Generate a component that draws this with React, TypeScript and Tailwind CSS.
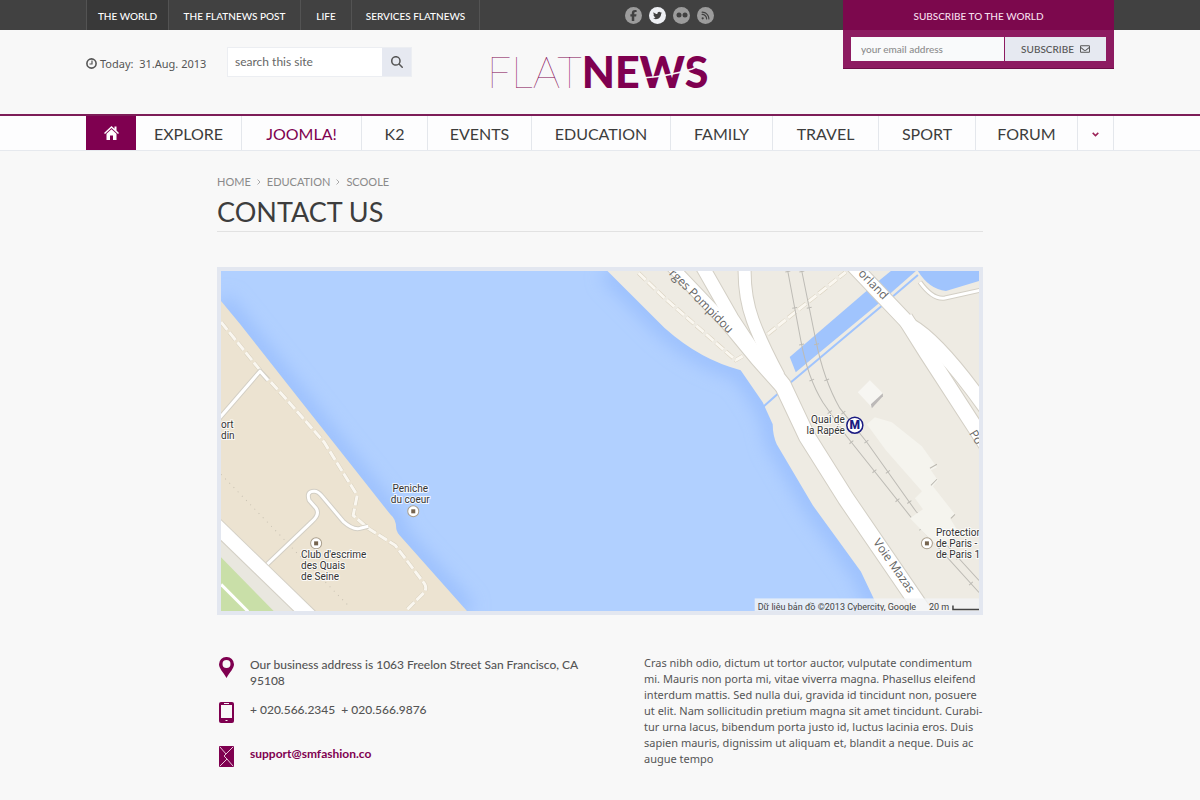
import React from "react";
import {
  FaFacebookF,
  FaMagnifyingGlass,
  FaRegEnvelope,
  FaRss,
  FaTwitter,
} from "react-icons/fa6";

type ContainerProps = { children: React.ReactNode; className?: string };

const Container = ({ children, className = "" }: ContainerProps) => (
  <div className={`mx-auto w-full max-w-[1028px] ${className}`}>{children}</div>
);

const DotsIcon = ({ className }: { className?: string }) => (
  <svg className={className} viewBox="0 0 12 12" fill="currentColor">
    <circle cx="3" cy="6" r="2.500" />
    <circle cx="9" cy="6" r="2.500" />
  </svg>
);

const topLinks = [
  { name: "THE WORLD", width: "w-[83px]", active: true },
  { name: "THE FLATNEWS POST", width: "w-[132px]" },
  { name: "LIFE", width: "w-[51px]" },
  { name: "SERVICES FLATNEWS", width: "w-[128px]" },
];

const socialLinks = [
  { name: "Facebook", Icon: FaFacebookF, color: "bg-[#9c9c9c]", size: "size-[11px]" },
  { name: "Twitter", Icon: FaTwitter, color: "bg-[#eef0f4]", size: "size-[9px]" },
  { name: "Flickr", Icon: DotsIcon, color: "bg-[#9c9c9c]", size: "size-[12px]" },
  { name: "RSS", Icon: FaRss, color: "bg-[#9c9c9c]", size: "size-[9px]" },
];

const TopBar = () => (
  <div className="bg-[#414141] text-[10px] font-medium text-white">
    <Container className="grid h-[30px] grid-cols-[394px_1fr_271px]">
      <ul className="flex">
        {topLinks.map((item) => (
          <li
            key={item.name}
            className={`border-r border-[#535353] ${item.width} ${item.active ? "border-l bg-[#393939]" : ""}`}
          >
            <a href="#" className="flex h-full items-center justify-center whitespace-nowrap pt-0.5">
              {item.name}
            </a>
          </li>
        ))}
      </ul>
      <div className="flex items-center justify-center gap-[7px] pl-4">
        {socialLinks.map(({ name, Icon, color, size }) => (
          <a
            key={name}
            href="#"
            aria-label={name}
            className={`flex size-[17px] items-center justify-center rounded-full text-[#414141] ${color}`}
          >
            <Icon className={size} />
          </a>
        ))}
      </div>
    </Container>
  </div>
);

const Subscribe = () => (
  <form className="absolute top-0 right-0 w-[271px] border-b border-[#6d0d47] bg-[#8d1b61] text-[10px] font-medium">
    <label htmlFor="email" className="flex h-[30px] items-center justify-center bg-[#7c084d] pt-0.5 text-[#f6dfec]">
      SUBSCRIBE TO THE WORLD
    </label>
    <div className="flex gap-px px-2 py-[7px]">
      <input
        id="email"
        type="email"
        placeholder="your email address"
        className="h-6 w-[153px] bg-[#f9fafb] px-[10px] placeholder:text-[#8c8c8c]"
      />
      <button type="button" className="flex h-6 flex-1 items-center justify-center gap-[6px] bg-[#e6e9f1] text-[#555]">
        SUBSCRIBE
        <FaRegEnvelope className="size-[10px]" />
      </button>
    </div>
  </form>
);

const Logo = () => (
  <a href="#" className="relative flex text-[43px] leading-none text-[#7f0050]">
    <span className="font-thin">FLAT</span>
    <span className="font-black">NEWS</span>
    <svg className="absolute right-0 bottom-0 h-full w-[66px]" viewBox="0 0 66 43" fill="none">
      <path d="M0 28Q28 26 50 19L66 12" stroke="#f8f8f8" strokeWidth="1.500" />
    </svg>
  </a>
);

const Header = () => (
  <Container className="grid h-[84px] grid-cols-[141px_260px_1fr]">
    <div className="flex items-start gap-[3px] pt-[26px] font-['Noto_Sans'] text-[11px] leading-4 text-[#555]">
      <svg className="mt-[2px] size-[11px]" viewBox="0 0 11 11" fill="none" stroke="currentColor">
        <circle cx="5.500" cy="5.500" r="4.600" strokeWidth="1.600" />
        <path d="M6 2.500V6H3.500" strokeWidth="1.200" />
      </svg>
      <span className="whitespace-pre">Today:  31.Aug. 2013</span>
    </div>
    <form className="mt-[17px] flex h-[30px] w-[185px] border border-[#eceef2]">
      <input
        aria-label="Search"
        type="text"
        placeholder="search this site"
        className="w-[154px] bg-white px-[7px] text-[12px] placeholder:text-[#666]"
      />
      <button
        type="button"
        aria-label="Search"
        className="flex flex-1 items-center justify-center bg-[#e6e9f1] text-[#555]"
      >
        <FaMagnifyingGlass className="size-[12px]" />
      </button>
    </form>
    <div className="mt-[20px] flex items-start">
      <Logo />
    </div>
  </Container>
);

const menu = [
  { name: "EXPLORE", width: "w-[106px]" },
  { name: "JOOMLA!", width: "w-[120px]", active: true },
  { name: "K2", width: "w-[66px]" },
  { name: "EVENTS", width: "w-[104px]" },
  { name: "EDUCATION", width: "w-[139px]" },
  { name: "FAMILY", width: "w-[102px]" },
  { name: "TRAVEL", width: "w-[106px]" },
  { name: "SPORT", width: "w-[97px]" },
  { name: "FORUM", width: "w-[102px]" },
];

const Nav = () => (
  <nav className="border-t-2 border-b border-t-[#7d1d58] border-b-[#e6e9ee] bg-[#fdfdfe]">
    <Container>
      <ul className="flex h-[34px] text-[16px] text-[#3d3d3d]">
        <li className="w-[50px]">
          <a
            href="#"
            aria-label="Home"
            className="flex h-full items-center justify-center bg-[#7f0050] text-white"
          >
            <svg className="h-[14px] w-[15px]" viewBox="0 0 15 14" fill="currentColor">
              <path d="M7.500 0 0 7l1 1 6.500-6L14 8l1-1-2.500-2.400V.500h-2v2.300z" />
              <path d="M7.500 3.200 2.500 7.800V14H6V9.500h3V14h3.500V7.800z" />
            </svg>
          </a>
        </li>
        {menu.map((item) => (
          <li key={item.name} className={`border-r border-[#e4e7ec] ${item.width}`}>
            <a
              href="#"
              className={`flex h-full items-center justify-center pt-px ${item.active ? "text-[#7f0050]" : ""}`}
            >
              {item.name}
            </a>
          </li>
        ))}
        <li className="flex-1 border-r border-[#e4e7ec]">
          <button
            type="button"
            aria-label="More"
            className="flex size-full items-center justify-center pt-0.5 text-[#9b2257]"
          >
            <svg className="h-[5px] w-[7px]" viewBox="0 0 7 5" fill="none" stroke="currentColor" strokeWidth="1.500">
              <path d="m.7.900 2.800 2.700L6.300.900" />
            </svg>
          </button>
        </li>
      </ul>
    </Container>
  </nav>
);

const crumbs = ["HOME", "EDUCATION", "SCOOLE"];

const PageTitle = () => (
  <div className="border-b border-[#e2e2e2] pt-[23px]">
    <ol className="flex text-[11px] leading-4 text-[#8a8a8a]">
      {crumbs.map((name, i) => (
        <li key={name} className="flex items-center">
          {i > 0 && (
            <svg className="mx-[6px] h-[6px] w-1" viewBox="0 0 4 6" fill="none" stroke="#aaa">
              <path d="m.5.500 2.500 2.500-2.500 2.500" />
            </svg>
          )}
          <a href="#">{name}</a>
        </li>
      ))}
    </ol>
    <h1 className="pt-[6px] pb-[3px] text-[27px] leading-8 text-[#3d3d3d]">CONTACT US</h1>
  </div>
);

type Street = { d: string; width: number };

// All casings go under all fills, so that streets merge where they meet
const Roads = ({ streets }: { streets: Street[] }) => (
  <g fill="none" strokeLinejoin="round">
    {streets.map(({ d, width }) => (
      <path key={d} d={d} stroke="#d3cfc5" strokeWidth={width + 2} />
    ))}
    {streets.map(({ d, width }) => (
      <path key={d} d={d} stroke="#fff" strokeWidth={width} />
    ))}
  </g>
);

const Footpath = ({ d }: { d: string }) => (
  <g fill="none" strokeDasharray="10 3">
    <path d={d} stroke="#d9d1bf" strokeWidth="4" />
    <path d={d} stroke="#faf7f0" strokeWidth="3" />
  </g>
);

const Rail = ({ d }: { d: string }) => (
  <g fill="none" stroke="#bdbbb5">
    <path d={d} />
    <path d={d} strokeWidth="5" strokeDasharray="1 36" />
  </g>
);

const Place = ({ x, y }: { x: number; y: number }) => (
  <g>
    <circle cx={x} cy={y} r="5.500" fill="#fff" stroke="#a99e8c" />
    <rect x={x - 2} y={y - 2} width="4" height="4" fill="#75644f" />
  </g>
);

type MapLabelProps = {
  x: number;
  y: number;
  lines: string[];
  anchor?: "start" | "middle" | "end";
};

const MapLabel = ({ x, y, lines, anchor = "start" }: MapLabelProps) => (
  <text
    textAnchor={anchor}
    className="fill-[#333] stroke-white/80 font-[Roboto] text-[10px]"
    strokeWidth="2"
    paintOrder="stroke"
  >
    {lines.map((line, i) => (
      <tspan key={line} x={x} y={y + i * 11}>
        {line}
      </tspan>
    ))}
  </text>
);

const banks = {
  left: "M221 301L240 324L300 400L345 457L390 514Q396 519 396 528Q396 532 402 538L467 611",
  right: "M607 271L664 328Q700 360 740 370L762 402L772 424Q772 435 776 444L812 505L860 571L879 611",
};

const gardenPaths = [
  { d: "M216 422L260 371L268 380", width: 3 },
  {
    d: "M267 564L312 521Q320 514 316 508L309 500Q306 491 314 491Q318 491 322 496L343 521Q353 530 360 528L368 526",
    width: 3,
  },
];

const streets = [
  { d: "M668 263L727 325L755 359L780 387", width: 11 },
  { d: "M698 260L731 318L760 362", width: 13 },
  { d: "M744 265Q743 295 752 320Q760 342 778 376", width: 12 },
  { d: "M758 355L782 385L806 436L845 498L925 615", width: 16 },
  { d: "M850 263L910 326Q938 342 985 408", width: 14 },
  { d: "M904 318L926 353L985 444", width: 15 },
];

const Map = () => (
  <figure className="mt-[35px] border-4 border-[#e3e7f0]">
    <svg className="block w-full" viewBox="221 271 757 340" role="img" aria-label="Map of the Quai de la Rapée">
      <defs>
        <filter id="shade" x="-20%" y="-20%" width="140%" height="140%">
          <feGaussianBlur stdDeviation="9" />
        </filter>
      </defs>
      <rect x="221" y="271" width="757" height="340" fill="#b1d0ff" />
      <g fill="none" stroke="#93bafc" strokeWidth="18" strokeOpacity=".8" filter="url(#shade)">
        <path d={banks.left} />
        <path d={banks.right} />
      </g>

      {/* left bank */}
      <path d={`${banks.left}H221Z`} fill="#ece3d1" />
      <path d="M221 535L300 611H221Z" fill="#e9e7df" />
      <path d="M221 557L274 611H221Z" fill="#c9dfa8" />
      <path d="M221 584L248 611" stroke="#fff" strokeWidth="3" />
      <path d="M221 474L282 537L300 556L350 607" fill="none" stroke="#c8c1b2" strokeDasharray="1 5" />
      <Footpath d="M221 322L260 370L288 401L324 442L357 495L353 515L368 528L395 545L424 583Q428 589 421 595L405 611" />
      <Roads streets={gardenPaths} />
      <Roads streets={[{ d: "M214 523L312 618", width: 14 }]} />

      {/* right bank */}
      <path d={`${banks.right}H978V271Z`} fill="#eeebe3" />
      <path d="M789 357L868 289L890 271H915L882 300L795 372Z" fill="#a0c4fd" />
      <path d="M762 407L789 383L882 305L917 275" fill="none" stroke="#a0c4fd" strokeWidth="2" />
      <path d="M917 271Q928 289 945 291L978 281V271Z" fill="#a0c4fd" />
      <Roads streets={[{ d: "M919 282Q932 300 944 298L980 290", width: 3 }]} />
      <Footpath d="M638 273L664 298L735 360L742 356" />
      <Footpath d="M767 334L845 272" />
      <path d="M857 392L869 380L882 393L870 406Z" fill="#f7f6f2" />
      <path d="M870 404L882 393V396L871 408Z" fill="#bcb9b8" />
      <Rail d="M787 271L800 340Q807 378 822 402L845 435L911 518L978 592" />
      <Rail d="M801 271L815 340Q823 380 839 408L866 442L915 511L978 580" />
      <path
        d="M866 424L874 417L891 422L921 446L936 467L930 470L937 480L932 486L954 514L949 518L959 534L935 545L909 518L922 509L914 498L921 491L885 450Z"
        fill="#f5f4ee"
      />
      <path d="M929 468l7-4m-6 21 6-6m14 39 4-4" stroke="#bbb8b0" />
      <Roads streets={streets} />

      <g className="fill-[#666] font-['Open_Sans'] text-[12px]">
        <text transform="translate(668 274) rotate(45)">rges Pompidou</text>
        <text transform="translate(857 274) rotate(46)">orland</text>
        <text transform="translate(872 542) rotate(55)">Voie Mazas</text>
        <text transform="translate(968 433) rotate(58)">Po</text>
      </g>

      <Place x={413} y={511} />
      <Place x={316} y={543} />
      <Place x={926} y={543} />
      <MapLabel x={410} y={492} lines={["Peniche", "du coeur"]} anchor="middle" />
      <MapLabel x={301} y={558} lines={["Club d'escrime", "des Quais", "de Seine"]} />
      <MapLabel x={221} y={428} lines={["ort", "din"]} />
      <MapLabel x={844} y={423} lines={["Quai de", "la Rapée"]} anchor="end" />
      <MapLabel x={935} y={536} lines={["Protection", "de Paris -", "de Paris 1"]} />
      <circle cx="854" cy="425" r="8" fill="#fff" stroke="#1b1b82" strokeWidth="1.500" />
      <text x="854" y="429" textAnchor="middle" className="fill-[#1b1b82] font-[Roboto] text-[12px] font-black">
        M
      </text>

      <rect x="754" y="598" width="224" height="13" fill="#f3f4f5" fillOpacity=".8" />
      <g className="fill-[#444] font-[Roboto] text-[9px]">
        <text x="757" y="610">Dữ liệu bản đồ ©2013 Cybercity, Google</text>
        <text x="928" y="610">20 m</text>
      </g>
      <path d="M952 605V609H978" fill="none" stroke="#444" strokeWidth="1.500" />
    </svg>
  </figure>
);

const PinIcon = () => (
  <svg className="h-[21px] w-[15px]" viewBox="0 0 15 21">
    <path
      fillRule="evenodd"
      d="M7.500 0A7.300 7.300 0 0 0 0 7.300C0 11.500 4 15 7.500 21 11 15 15 11.500 15 7.300A7.300 7.300 0 0 0 7.500 0Zm0 3a4 4 0 1 1 0 8 4 4 0 0 1 0-8Z"
      fill="#7f0050"
    />
  </svg>
);

const PhoneIcon = () => (
  <svg className="h-[21px] w-[15px]" viewBox="0 0 15 21">
    <rect width="15" height="21" rx="2" fill="#7f0050" />
    <path d="M2 3h11v13H2z" fill="#f8f8f8" />
    <path d="M5 1.500h5M6.500 18.500h2" stroke="#f8f8f8" />
  </svg>
);

const MailIcon = () => (
  <svg className="h-[21px] w-[15px]" viewBox="0 0 15 21">
    <rect width="15" height="21" rx="1" fill="#7f0050" />
    <path d="M1 1l6 7-2 2 3 3-7 7M14 1 7 8M8 13l6 7" fill="none" stroke="#e9c6da" />
  </svg>
);

const Contact = () => (
  <section className="mt-[40px] grid grid-cols-[1fr_339px] gap-[59px] pl-0.5 text-[#555]">
    <ul className="pt-0.5 text-[12px] leading-4 font-medium">
      <li className="flex h-[45px] gap-4">
        <PinIcon />
        <span className="flex-1">
          Our business address is 1063 Freelon Street San Francisco, CA
          <br />
          95108
        </span>
      </li>
      <li className="flex h-[44px] gap-4">
        <PhoneIcon />
        <span className="whitespace-pre">+ 020.566.2345  + 020.566.9876</span>
      </li>
      <li className="flex gap-4">
        <MailIcon />
        <a href="mailto:support@smfashion.co" className="font-bold text-[#7f0050]">
          support@smfashion.co
        </a>
      </li>
    </ul>
    <p className="font-['Noto_Sans'] text-[11px] leading-4">
      Cras nibh odio, dictum ut tortor auctor, vulputate condimentum
      <br />
      mi. Mauris non porta mi, vitae viverra magna. Phasellus eleifend
      <br />
      interdum mattis. Sed nulla dui, gravida id tincidunt non, posuere
      <br />
      ut elit. Nam sollicitudin pretium magna sit amet tincidunt. Curabi-
      <br />
      tur urna lacus, bibendum porta justo id, luctus lacinia eros. Duis
      <br />
      sapien mauris, dignissim ut aliquam et, blandit a neque. Duis ac
      <br />
      augue tempo
    </p>
  </section>
);

export default function App() {
  return (
    <div className="min-h-screen bg-[#f8f8f8] font-[Lato,sans-serif]">
      <header className="relative">
        <TopBar />
        <Header />
        <div className="absolute inset-x-0 top-0">
          <Container className="relative">
            <Subscribe />
          </Container>
        </div>
        <Nav />
      </header>
      <main className="mx-auto w-full max-w-[766px] pb-8">
        <PageTitle />
        <Map />
        <Contact />
      </main>
    </div>
  );
}
